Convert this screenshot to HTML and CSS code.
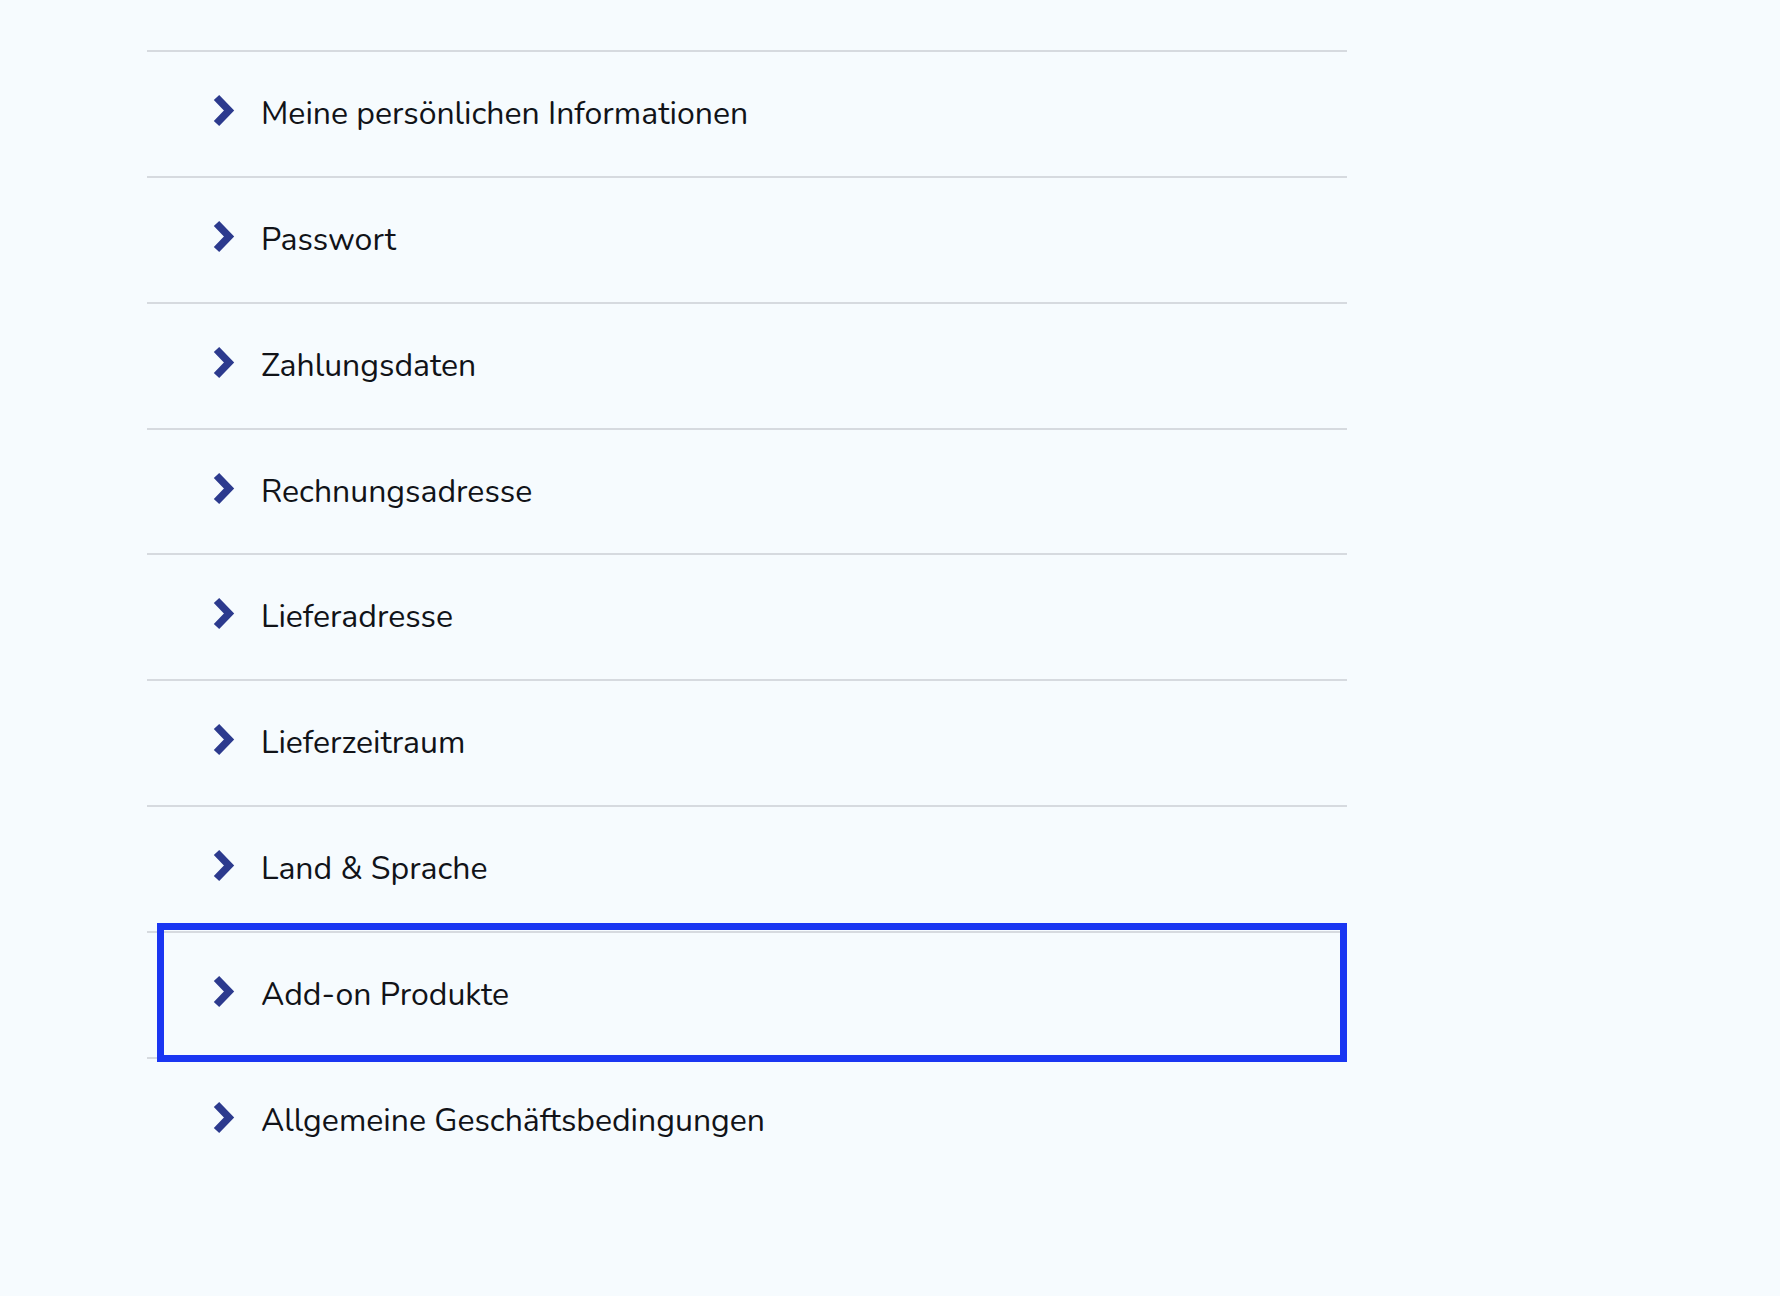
FILE: index.html
```html
<!DOCTYPE html>
<html lang="de">
<head>
<meta charset="utf-8">
<title>Mein Konto</title>
<link rel="stylesheet" href="styles.css">
</head>
<body>
<main class="page">
  <ul class="menu">
    <li class="menu-item"><a class="menu-link" href="#"><svg class="chev" viewBox="0 0 24 33" width="24" height="33"><polyline points="4.5,3.5 17,16.5 4.5,29.5"/></svg><span class="label">Meine persönlichen Informationen</span></a></li>
    <li class="menu-item"><a class="menu-link" href="#"><svg class="chev" viewBox="0 0 24 33" width="24" height="33"><polyline points="4.5,3.5 17,16.5 4.5,29.5"/></svg><span class="label">Passwort</span></a></li>
    <li class="menu-item"><a class="menu-link" href="#"><svg class="chev" viewBox="0 0 24 33" width="24" height="33"><polyline points="4.5,3.5 17,16.5 4.5,29.5"/></svg><span class="label">Zahlungsdaten</span></a></li>
    <li class="menu-item"><a class="menu-link" href="#"><svg class="chev" viewBox="0 0 24 33" width="24" height="33"><polyline points="4.5,3.5 17,16.5 4.5,29.5"/></svg><span class="label">Rechnungsadresse</span></a></li>
    <li class="menu-item"><a class="menu-link" href="#"><svg class="chev" viewBox="0 0 24 33" width="24" height="33"><polyline points="4.5,3.5 17,16.5 4.5,29.5"/></svg><span class="label">Lieferadresse</span></a></li>
    <li class="menu-item"><a class="menu-link" href="#"><svg class="chev" viewBox="0 0 24 33" width="24" height="33"><polyline points="4.5,3.5 17,16.5 4.5,29.5"/></svg><span class="label">Lieferzeitraum</span></a></li>
    <li class="menu-item"><a class="menu-link" href="#"><svg class="chev" viewBox="0 0 24 33" width="24" height="33"><polyline points="4.5,3.5 17,16.5 4.5,29.5"/></svg><span class="label">Land &amp; Sprache</span></a></li>
    <li class="menu-item is-focused"><a class="menu-link" href="#"><svg class="chev" viewBox="0 0 24 33" width="24" height="33"><polyline points="4.5,3.5 17,16.5 4.5,29.5"/></svg><span class="label">Add-on Produkte</span></a></li>
    <li class="menu-item"><a class="menu-link" href="#"><svg class="chev" viewBox="0 0 24 33" width="24" height="33"><polyline points="4.5,3.5 17,16.5 4.5,29.5"/></svg><span class="label">Allgemeine Geschäftsbedingungen</span></a></li>
  </ul>
</main>
</body>
</html>
```

FILE: styles.css
```css
html, body {
  margin: 0;
  padding: 0;
  background: #f6fbfe;
}

body {
  font-family: "Nunito", "Lato", "Noto Sans", sans-serif;
  color: #111318;
  min-height: 1296px;
}

.page {
  padding: 50px 0 0 147px;
  width: 1200px;
}

.menu {
  list-style: none;
  margin: 0;
  padding: 0;
}

.menu-item {
  position: relative;
  border-top: 2px solid #d6dadf;
  height: 123.86px;
}

.menu-link {
  display: flex;
  align-items: center;
  height: 100%;
  padding-left: 65px;
  gap: 25px;
  color: inherit;
  text-decoration: none;
}

.chev {
  flex: none;
  margin-top: -7px;
}

.chev polyline {
  fill: none;
  stroke: #2c3a8e;
  stroke-width: 7.5;
  stroke-linecap: butt;
  stroke-linejoin: miter;
  stroke-miterlimit: 10;
}

.label {
  font-size: 32px;
  line-height: 1;
}

.is-focused::after {
  content: "";
  position: absolute;
  z-index: 1;
  top: -10px;
  left: 10px;
  right: 0;
  bottom: -5px;
  border: 7px solid #1a36f2;
  pointer-events: none;
}
```
